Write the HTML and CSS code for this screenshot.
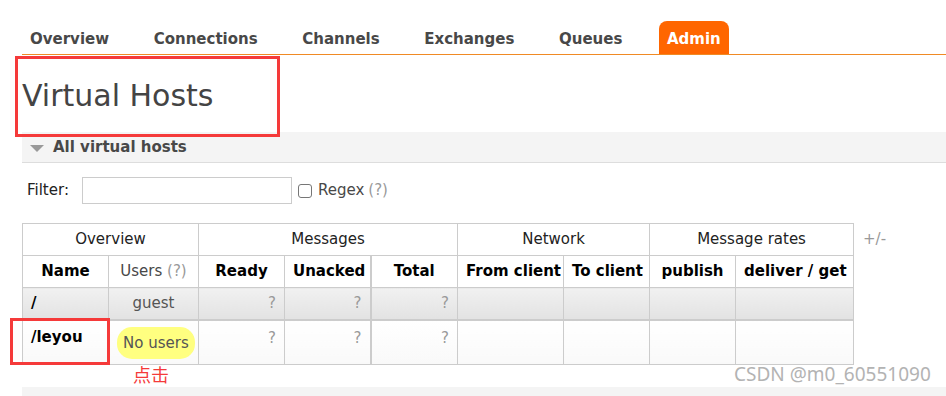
FILE: index.html
```html
<!DOCTYPE html>
<html>
<head>
<meta charset="utf-8">
<link rel="stylesheet" href="styles.css">
</head>
<body>
<div class="page">
  <nav class="tabs">
    <span class="tab">Overview</span>
    <span class="tab">Connections</span>
    <span class="tab">Channels</span>
    <span class="tab">Exchanges</span>
    <span class="tab">Queues</span>
    <span class="tab active">Admin</span>
  </nav>
  <h1 class="title">Virtual Hosts</h1>
  <div class="section-head"><span class="tri"></span>All virtual hosts</div>
  <div class="filter">
    <label class="filter-label">Filter:</label>
    <input class="filter-input" type="text">
    <span class="regex"><span class="cb"></span>Regex <span class="help">(?)</span></span>
  </div>
  <div class="table-wrap">
    <table class="list">
      <colgroup>
        <col style="width:86px"><col style="width:90px"><col style="width:86px"><col style="width:86px"><col style="width:87px"><col style="width:106px"><col style="width:86px"><col style="width:86px"><col style="width:118px">
      </colgroup>
      <thead>
        <tr class="group">
          <th colspan="2">Overview</th>
          <th colspan="3">Messages</th>
          <th colspan="2">Network</th>
          <th colspan="2">Message rates</th>
        </tr>
        <tr class="cols">
          <th>Name</th>
          <th class="plain">Users <span class="help">(?)</span></th>
          <th>Ready</th>
          <th>Unacked</th>
          <th class="thick">Total</th>
          <th>From client</th>
          <th>To client</th>
          <th>publish</th>
          <th>deliver / get</th>
        </tr>
      </thead>
      <tbody>
        <tr class="alt1">
          <td class="name">/</td>
          <td class="users">guest</td>
          <td class="num">?</td>
          <td class="num">?</td>
          <td class="num thick">?</td>
          <td></td><td></td><td></td><td></td>
        </tr>
        <tr class="alt2">
          <td class="name">/leyou</td>
          <td class="users"><span class="badge">No users</span></td>
          <td class="num">?</td>
          <td class="num">?</td>
          <td class="num thick">?</td>
          <td></td><td></td><td></td><td></td>
        </tr>
      </tbody>
    </table>
    <span class="plusminus">+/-</span>
  </div>
  <div class="next-section"></div>

  <div class="mark mark-title"></div>
  <div class="mark mark-row"></div>
  <div class="click-note">点击</div>
  <div class="watermark">CSDN @m0_60551090</div>
</div>
</body>
</html>
```
FILE: styles.css
```css
html, body {
  margin: 0;
  padding: 0;
  background: #fff;
}
body {
  font-family: "DejaVu Sans", Verdana, sans-serif;
  font-size: 15px;
  color: #484848;
}
.page {
  position: relative;
  width: 946px;
  height: 396px;
  overflow: hidden;
  padding-left: 22px;
  box-sizing: border-box;
}
.tabs {
  display: flex;
  gap: 28.6px;
  margin-top: 21px;
  border-bottom: 1px solid #f08a24;
  height: 33px;
  align-items: flex-end;
}
.tab {
  font-weight: bold;
  font-size: 15px;
  color: #484848;
  padding: 0 8px 5px;
  line-height: 20px;
}
.tab.active {
  background: #ff6600;
  color: #fff;
  border-radius: 8px 8px 0 0;
  padding: 8px 8px 5px;
}
.title {
  margin: 0;
  font-weight: normal;
  font-size: 30px;
  color: #444;
  line-height: 36px;
  padding-top: 23px;
  height: 77px;
  box-sizing: border-box;
}
.section-head {
  background: #f4f4f4;
  border-bottom: 1px solid #ddd;
  height: 30px;
  display: flex;
  align-items: center;
  font-weight: bold;
  color: #484848;
  font-size: 15px;
  padding-left: 8px;
}
.tri {
  width: 0;
  height: 0;
  border-left: 7px solid transparent;
  border-right: 7px solid transparent;
  border-top: 7px solid #999;
  margin-right: 9px;
  margin-top: 2px;
}
.filter {
  display: flex;
  align-items: center;
  height: 28px;
  margin-top: 13px;
  padding-left: 5px;
}
.filter-label {
  color: #222;
  margin-right: 13px;
}
.filter-input {
  width: 210px;
  height: 27px;
  box-sizing: border-box;
  border: 1px solid #ccc;
  margin: 0 6px 0 0;
  padding: 0;
}
.regex {
  display: flex;
  align-items: center;
  color: #484848;
}
.cb {
  width: 12px;
  height: 12px;
  border: 1px solid #767676;
  border-radius: 3px;
  margin-right: 6px;
  margin-top: 1px;
}
.help {
  color: #999;
  margin-left: 4px;
}
.table-wrap {
  display: flex;
  align-items: flex-start;
  margin-top: 19px;
}
.list {
  border-collapse: collapse;
  table-layout: fixed;
  width: 831px;
  color: #000;
}
.list th, .list td {
  border: 1px solid #ccc;
  padding: 7px 8px;
  line-height: 17px;
  font-size: 15px;
  white-space: nowrap;
  overflow: hidden;
}
.list th {
  background: #fff;
  text-align: center;
}
.group th {
  font-weight: normal;
  color: #222;
  height: 17px;
}
.cols th {
  font-weight: bold;
}
.cols th.plain {
  font-weight: normal;
  color: #484848;
}
.cols .help {
  margin-left: 0;
}
.thick {
  border-left: 2px solid #ccc !important;
}
.list td {
  vertical-align: top;
}
.alt1 td {
  background: linear-gradient(#f1f1f1, #e2e2e2);
}
.alt2 td {
  background: linear-gradient(#fff, #f9f9f9);
  border-top: 2px solid #ccc;
  padding-top: 6px;
  padding-bottom: 5px;
}
.name {
  font-weight: bold;
  text-align: left;
  color: #000;
}
.alt2 .name {
  padding-top: 8px;
}
.alt2 .num {
  padding-top: 9px;
}
.users {
  text-align: center;
  color: #555;
}
.num {
  text-align: right;
  color: #999;
}
.badge {
  display: inline-block;
  background: #ffff80;
  border-radius: 15px;
  padding: 7px 6px;
  line-height: 18px;
  color: #555;
}
.plusminus {
  color: #999;
  margin-left: 9px;
  margin-top: 7px;
}
.next-section {
  margin-top: 22px;
  height: 12px;
  background: #f4f4f4;
}
.mark {
  position: absolute;
  border: 3px solid #f53a3a;
  box-sizing: border-box;
}
.mark-title {
  left: 15px;
  top: 56px;
  width: 265px;
  height: 81px;
}
.mark-row {
  left: 10px;
  top: 318px;
  width: 100px;
  height: 47px;
}
.click-note {
  position: absolute;
  left: 133px;
  top: 363px;
  font-family: "Noto Sans CJK SC", sans-serif;
  font-size: 18px;
  line-height: 22px;
  color: #f53a3a;
}
.watermark {
  position: absolute;
  left: 734px;
  top: 362px;
  font-family: "Noto Sans", "DejaVu Sans", sans-serif;
  font-size: 19px;
  line-height: 24px;
  color: #b3b3b3;
}
```
